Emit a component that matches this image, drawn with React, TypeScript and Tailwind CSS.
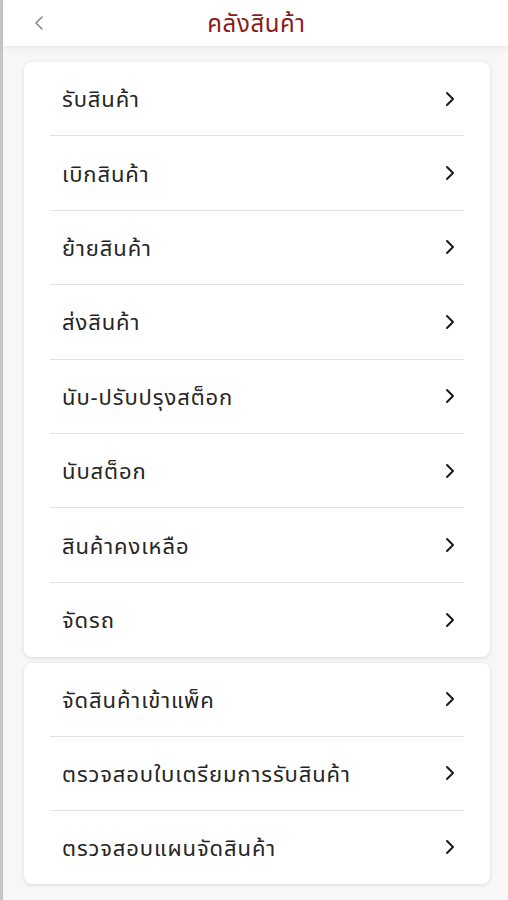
import { ChevronLeft, ChevronRight } from "lucide-react"

const groupA = [
  "รับสินค้า",
  "เบิกสินค้า",
  "ย้ายสินค้า",
  "ส่งสินค้า",
  "นับ-ปรับปรุงสต็อก",
  "นับสต็อก",
  "สินค้าคงเหลือ",
  "จัดรถ",
]

const groupB = [
  "จัดสินค้าเข้าแพ็ค",
  "ตรวจสอบใบเตรียมการรับสินค้า",
  "ตรวจสอบแผนจัดสินค้า",
]

function MenuCard({ items, rowH }: { items: string[]; rowH: string }) {
  return (
    <div className="bg-white rounded-lg shadow-[0_1px_4px_rgba(0,0,0,0.12)] px-[26px]">
      {items.map((item, i) => (
        <div
          key={item}
          className={
            (i === items.length - 1 ? "" : "border-b border-[#e2e2e2] ") +
            rowH +
            " flex items-center justify-between pl-3 pr-[2px]"
          }
        >
          <span className="text-[22px] tracking-[0.9px] text-[#262626]">{item}</span>
          <ChevronRight className="w-[24px] h-[24px] text-[#1a1a1a]" strokeWidth={2} />
        </div>
      ))}
    </div>
  )
}

export default function App() {
  return (
    <div
      className="min-h-[900px] w-[508px] bg-[#f7f7f7] border-l-[3px] border-[#c6c6c6]"
      style={{ fontFamily: '"Noto Sans", "Noto Sans Thai", sans-serif' }}
    >
      <header className="relative h-[46px] bg-white shadow-[0_2px_6px_rgba(0,0,0,0.06)] flex items-center justify-center">
        <ChevronLeft className="absolute left-[24px] top-[11px] w-[24px] h-[24px] text-[#888]" strokeWidth={1.6} />
        <h1 className="text-[24px] tracking-[0.6px] text-[#8a1c1c] ml-[2px]">คลังสินค้า</h1>
      </header>
      <div className="pl-[21px] pr-[18px] pt-[16px] flex flex-col gap-[6px]">
        <MenuCard items={groupA} rowH="h-[74.4px]" />
        <MenuCard items={groupB} rowH="h-[73.7px]" />
      </div>
    </div>
  )
}
